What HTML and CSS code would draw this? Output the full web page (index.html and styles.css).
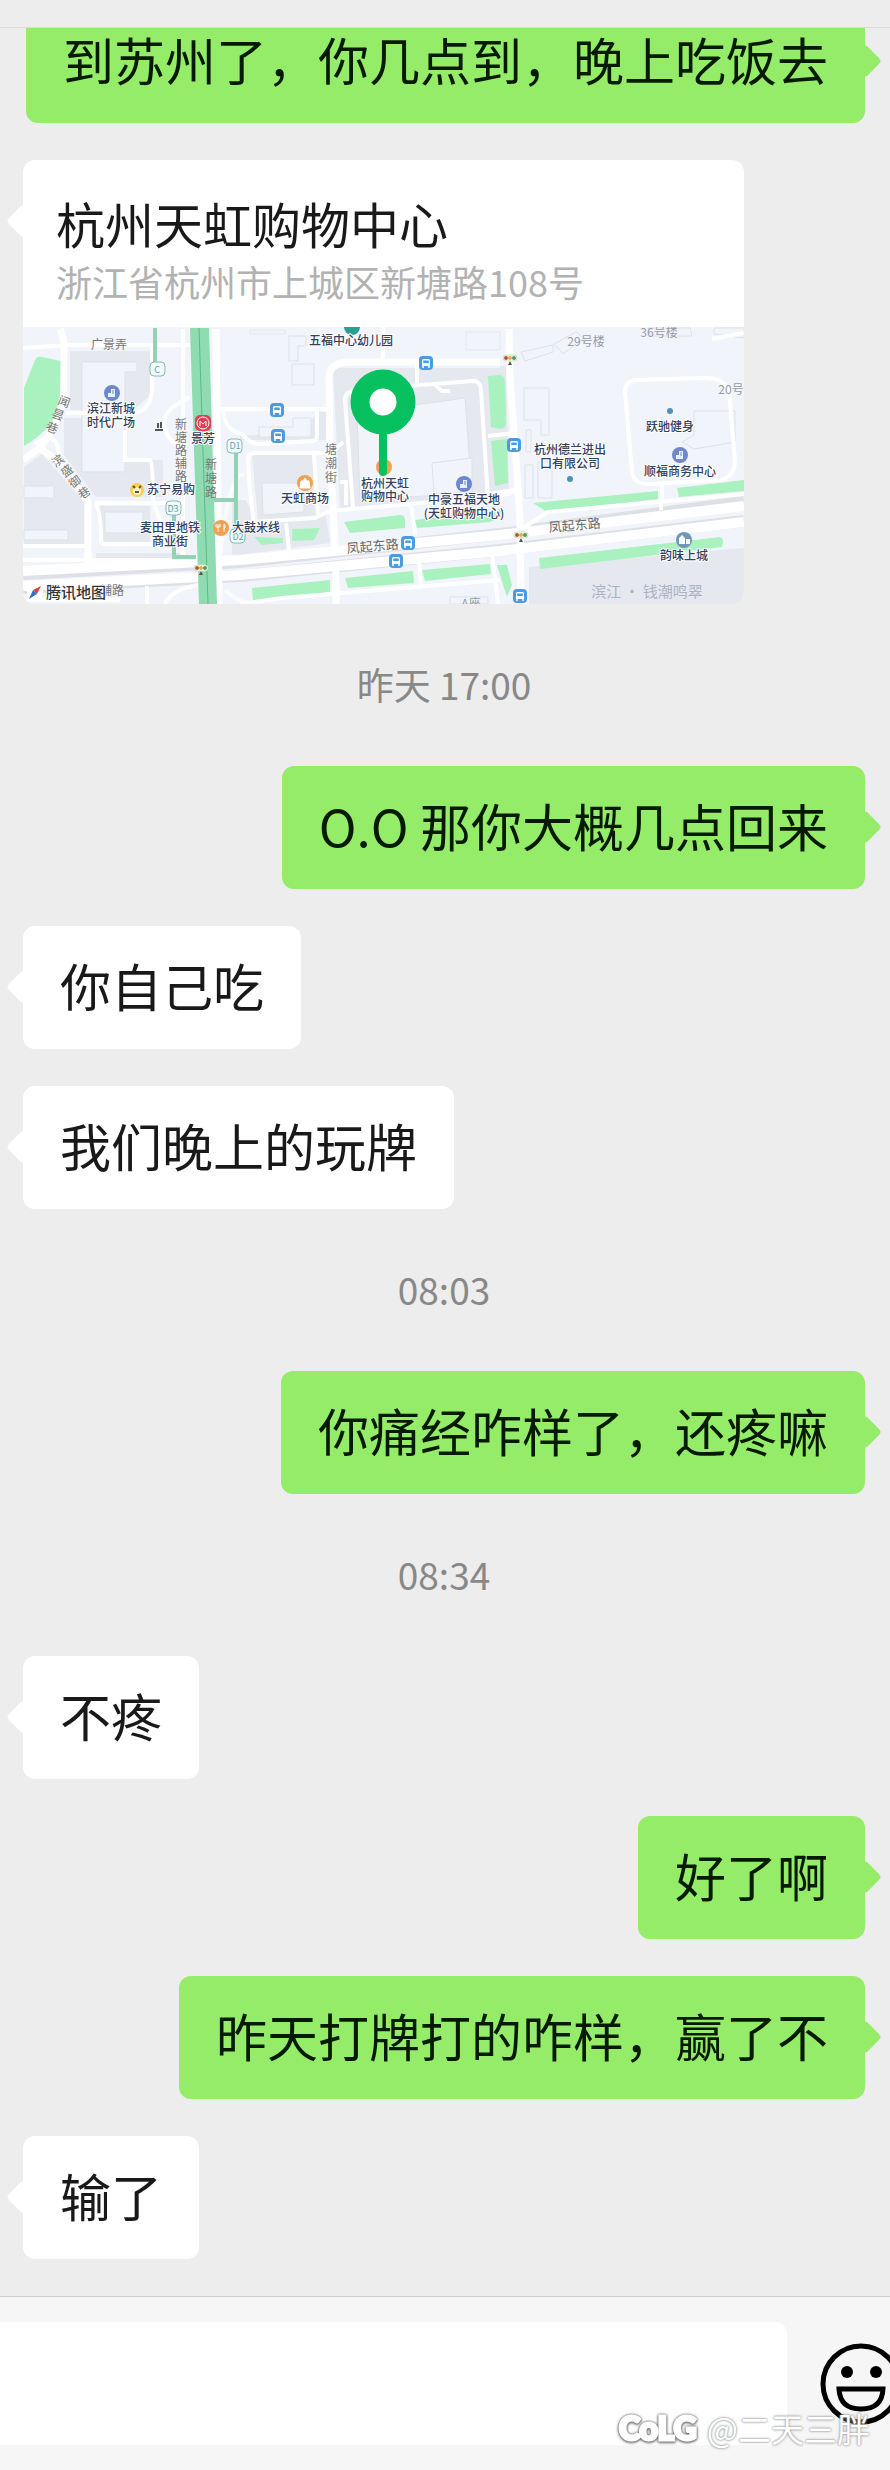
FILE: index.html
```html
<!DOCTYPE html>
<html lang="zh-CN">

<head>
    <meta charset="UTF-8">
    <meta name="viewport" content="width=device-width, initial-scale=1.0">
    <title>聊天</title>
    <link rel="stylesheet" href="styles.css">
</head>

<body>
    <header class="topbar"></header>

    <main class="chat">
        <div class="message sent">到苏州了，你几点到，晚上吃饭去</div>

        <div class="message received location">
            <h2 class="location-name">杭州天虹购物中心</h2>
            <p class="location-address">浙江省杭州市上城区新塘路108号</p>
            <svg class="map" viewBox="23 327 721 277" role="img" aria-label="地图">
                <defs>
                    <symbol id="bus" viewBox="0 0 16 16">
                        <rect x="1" y="1" width="14" height="14" rx="4" fill="#4a9be0" />
                        <path d="M4 5.500Q4 4 5.500 4H10.500Q12 4 12 5.500V11H4Z" fill="#fff" />
                        <path d="M5.200 5.500H10.800V8H5.200Z" fill="#4a9be0" />
                        <path d="M5 11V13M11 11V13" stroke="#fff" stroke-width="1.500" />
                    </symbol>
                    <symbol id="building" viewBox="0 0 16 16">
                        <circle cx="8" cy="8" r="8" fill="#6f87cb" />
                        <path d="M4 12V8H7V4H11V12Z" fill="#e8eefc" />
                        <path d="M8 6H10M8 8H10" stroke="#6f87cb" />
                    </symbol>
                    <symbol id="lights" viewBox="0 0 16 12">
                        <rect x="1" y="1" width="14" height="6" rx="3" fill="#fff" stroke="#cdb" />
                        <circle cx="4" cy="4" r="2" fill="#b0563e" />
                        <circle cx="8" cy="4" r="2" fill="#e0b040" />
                        <circle cx="12" cy="4" r="2" fill="#4d9a62" />
                        <path d="M8 7L10 11H6Z" fill="#555" />
                    </symbol>
                </defs>

                <rect x="23" y="327" width="721" height="277" fill="#f1f4fa" />

                <!-- city blocks -->
                <g fill="#e5e8ee">
                    <path d="M70 351H151V395L133 410H70Z" />
                    <path d="M64 418H122V460H163V497H96L64 455Z" />
                    <path d="M24 467L42 454L84 502V544H24Z" />
                    <path d="M98 506H150V543H104Z" />
                    <path d="M96 553H180V562H96Z" />
                    <path d="M333 368H500V500L340 510Z" />
                    <path d="M252 455H314L318 515L258 521Z" />
                    <path d="M232 500H246L256 522L326 516L330 543L232 556Z" />
                    <path d="M529 567L744 548V604H529Z" />
                    <path d="M318 412H326V440H240V436L300 432Z" />
                    <path d="M500 366H506L509 490H500Z" />
                </g>
                <g fill="#f1f4fa" stroke="#dde1ea">
                    <path d="M82 362H137V372H125V472H82Z" />
                    <path d="M105 512H143V533H105Z" />
                    <path d="M24 486H54V498H24ZM24 530H68V540H24Z" />
                    <path d="M357 413L465 398L472 493L360 500Z" />
                    <path d="M262 483H304V512L263 515Z" />
                    <path d="M289 336H306V346H298V361H289ZM292 364H314V385H292Z" />
                    <path d="M259 427H293V418H311V437H259Z" />
                    <path d="M524 388H549V435H541V420H524ZM526 430V452H531V430ZM525 465H533V498H525ZM538 462H552V498H538Z" />
                    <path d="M521 352L553 345L553 352L525 361ZM554 344L576 332L584 338L563 354Z" />
                    <path d="M694 411H735V442L694 449L682 442L694 435Z" />
                    <path d="M432 463L472 458V493H434Z" />
                    <path d="M250 330H285V334H250ZM466 332H500V350H466Z" opacity=".6" />
                    <path d="M648 328H690L692 336H650ZM714 328H744V338L714 334Z" />
                    <path d="M450 597H488V604H450Z" />
                </g>

                <!-- parks -->
                <g fill="#a9f2bf">
                    <path d="M24 388L35 360Q37 356 42 357L61 361L60 405Q52 430 24 446Z" />
                    <path d="M344 522L400 515Q405 515 405 520V528L350 533Z" />
                    <path d="M415 520L500 509L505 514L490 522L417 528Z" />
                    <path d="M254 537L283 538V543L262 545Z" />
                    <path d="M292 529L320 528L314 540L292 541Z" />
                    <path d="M252 588L330 580V593L253 602Z" />
                    <path d="M345 578L413 571L414 583L348 588Z" />
                    <path d="M422 570L490 564L491 574L425 581Z" />
                    <path d="M488 376L500 375Q505 376 505 382L506 422Q506 429 500 429L491 427Z" />
                    <path d="M491 441L507 439L508 483L495 486Z" />
                    <path d="M533 503L658 491V499L547 512Z" />
                    <path d="M677 488L744 480V491L679 497Z" />
                    <path d="M539 558L720 537Q725 538 722 547L540 569Z" />
                    <path d="M497 565H507L512 585L507 597L500 575Z" />
                </g>

                <!-- road edges, then the roads over them -->
                <g class="road-edge">
                    <path d="M23 574L240 562L500 534L744 502M23 588L240 576L500 550L744 521" />
                </g>
                <g class="road">
                    <path class="road-main" d="M23 571L240 560L500 535L744 506M23 586L240 575L500 551L744 522" />
                    <path class="road-wide" d="M60 329Q65 340 64 350V390Q61 420 40 448L23 460M40 448L62 465L88 502V564" />
                    <path d="M23 348L70 345H190M66 413H134Q151 410 152 390V345M125 430V460H150Q153 462 153 500L163 530" />
                    <path d="M23 546H88M23 560H190M95 503H180M95 503Q101 510 101 540Q101 544 106 544H190M35 444Q56 430 58 450L62 466" />
                    <path d="M183 329V558M190 397Q163 410 164 424Q167 445 187 447M23 600H120M147 586V604M165 604Q170 590 198 585" />
                    <path class="road-wide" d="M216 329L219 604" />
                    <path d="M216 409H327M317 409V436Q317 441 312 441L260 444Q250 444 242 434M223 410Q224 430 242 434" />
                    <path class="road-wide" d="M500 362H350Q329 362 329 378L330 443L335 548M336 570V604" />
                    <path d="M353 508L345 400Q345 392 355 391L420 385L474 381Q480 381 481 390L488 500M417 363V385M435 385L442 391H450M383 327V362" />
                    <path d="M254 522Q249 490 248 460Q248 453 255 453H332M314 455L318 517M254 522L315 518L330 511L500 496L520 490M286 523L289 550M411 505L415 535M332 452L343 442M340 482H346V505" />
                    <path class="road-wide" d="M509 329L510 377L520 517L521 604" />
                    <path d="M625 392Q625 381 636 380L705 378Q725 378 729 392L735 460Q735 477 720 480L650 484Q634 485 632 472ZM662 485L661 510M488 436L515 433M488 494L515 490" />
                    <path d="M520 530L548 512L744 494M240 604L282 598L500 580M419 560L421 585M492 554L498 604M712 339L744 333" />
                    <path d="M225 590Q235 600 250 604M216 604Q225 470 244 475M100 420L125 420" opacity=".6" />
                </g>

                <!-- metro line and its exits -->
                <path d="M190 328H209L217 604H199Z" fill="#8fdcb2" />
                <path d="M199 328L208 604" stroke="#5cb88a" fill="none" />
                <g stroke="#93d3b3" stroke-width="4" fill="none">
                    <path d="M155 328V362M236 452V528M214 500H236M174 512V557H196" />
                </g>
                <g class="exit">
                    <rect x="150" y="362" width="15" height="14" rx="4" />
                    <rect x="227" y="439" width="15" height="14" rx="4" />
                    <rect x="166" y="501" width="15" height="14" rx="4" />
                    <rect x="230" y="529" width="15" height="14" rx="4" />
                </g>
                <g class="exit-name">
                    <text x="157" y="373">C</text>
                    <text x="235" y="449">D1</text>
                    <text x="173" y="512">D3</text>
                    <text x="238" y="540">D2</text>
                </g>
                <rect x="195" y="415" width="16" height="16" rx="5" fill="#dc4254" />
                <circle cx="203" cy="423" r="6" fill="none" stroke="#fff" />
                <path d="M200 426V421L203 424L206 421V426" fill="none" stroke="#fff" />

                <!-- points of interest -->
                <use href="#bus" x="418" y="355" width="16" height="16" />
                <use href="#bus" x="269" y="402" width="16" height="16" />
                <use href="#bus" x="270" y="428" width="16" height="16" />
                <use href="#bus" x="400" y="535" width="16" height="16" />
                <use href="#bus" x="388" y="553" width="16" height="16" />
                <use href="#bus" x="506" y="437" width="16" height="16" />
                <use href="#bus" x="512" y="588" width="16" height="16" />
                <use href="#building" x="104" y="385" width="16" height="16" />
                <use href="#building" x="456" y="476" width="16" height="16" />
                <use href="#building" x="672" y="447" width="16" height="16" />
                <use href="#lights" x="193" y="564" width="16" height="12" />
                <use href="#lights" x="502" y="354" width="16" height="12" />
                <use href="#lights" x="513" y="531" width="16" height="12" />
                <circle cx="684" cy="540" r="8" fill="#6d97b8" />
                <path d="M679 544V538L682 535L685 538V544ZM686 539H690V544H686Z" fill="#fff" />
                <circle cx="670" cy="411" r="3" fill="#4c93b8" />
                <circle cx="570" cy="479" r="3" fill="#4c93b8" />
                <path d="M344 327A8 8 0 0 0 360 327Z" fill="#2a9d94" />
                <circle cx="137" cy="490" r="7" fill="#f8cf52" />
                <circle cx="137" cy="491" r="4" fill="#fff3cf" />
                <path d="M133 486L135 488M141 486L139 488M135 492H139" stroke="#7b4a18" stroke-width="2" />
                <circle cx="221" cy="528" r="8" fill="#f0a050" />
                <path d="M218 524V532M216 524V527H220V524M224 532V524Q227 526 224 529" stroke="#fff" fill="none" />
                <circle cx="305" cy="483" r="8" fill="#f0a050" />
                <path d="M301 481H309L310 488H300ZM303 481Q305 476 307 481" fill="#fff" stroke="#fff" />
                <path d="M155 431V429H163V431ZM157 428V423H159V428M160 422H162V428H160Z" fill="#555" />

                <g class="road-name">
                    <text x="109" y="349">广景弄</text>
                    <text x="181" y="429">新</text>
                    <text x="181" y="442">塘</text>
                    <text x="181" y="455">路</text>
                    <text x="181" y="468">辅</text>
                    <text x="181" y="481">路</text>
                    <text x="211" y="469">新</text>
                    <text x="211" y="483">塘</text>
                    <text x="211" y="497">路</text>
                    <text x="331" y="454">塘</text>
                    <text x="331" y="468">潮</text>
                    <text x="331" y="482">街</text>
                    <text x="112" y="595">辅路</text>
                    <text transform="translate(64 402) rotate(20)" y="4">闻</text>
                    <text transform="translate(58 415) rotate(20)" y="4">昙</text>
                    <text transform="translate(52 428) rotate(20)" y="4">巷</text>
                    <text transform="translate(58 461) rotate(-35)" y="4">滨</text>
                    <text transform="translate(67 471) rotate(-35)" y="4">盛</text>
                    <text transform="translate(75 482) rotate(-35)" y="4">御</text>
                    <text transform="translate(84 493) rotate(-35)" y="4">巷</text>
                </g>
                <g class="street">
                    <text transform="translate(373 551) rotate(-5)">凤起东路</text>
                    <text transform="translate(575 530) rotate(-5)">凤起东路</text>
                </g>
                <g class="house">
                    <text x="586" y="346">29号楼</text>
                    <text x="659" y="337">36号楼</text>
                    <text x="737" y="394">20号楼</text>
                </g>
                <g class="place">
                    <text x="111" y="413">滨江新城</text>
                    <text x="111" y="427">时代广场</text>
                    <text x="203" y="443">景芳</text>
                    <text x="171" y="494">苏宁易购</text>
                    <text x="170" y="532">麦田里地铁</text>
                    <text x="170" y="546">商业街</text>
                    <text x="256" y="532">大鼓米线</text>
                    <text x="351" y="345">五福中心幼儿园</text>
                    <text x="305" y="503">天虹商场</text>
                    <text x="385" y="488">杭州天虹</text>
                    <text x="385" y="501">购物中心</text>
                    <text x="464" y="504">中豪五福天地</text>
                    <text x="464" y="518">(天虹购物中心)</text>
                    <text x="570" y="454">杭州德兰进出</text>
                    <text x="570" y="468">口有限公司</text>
                    <text x="670" y="431">跃驰健身</text>
                    <text x="680" y="476">顺福商务中心</text>
                    <text x="684" y="560">韵味上城</text>
                </g>
                <text class="estate" x="647" y="597">滨江 · 钱潮鸣翠</text>
                <text class="house" x="471" y="608">A座</text>

                <!-- location pin -->
                <circle cx="384" cy="467" r="8" fill="#f0a050" />
                <path d="M383 430V472" stroke="#07c160" stroke-width="8" stroke-linecap="round" />
                <circle cx="383" cy="402" r="23" fill="#fff" stroke="#07c160" stroke-width="19" />

                <!-- map provider -->
                <circle cx="35" cy="592" r="8" fill="#fff" />
                <path d="M41 586L37 594L33 590Z" fill="#e0403a" />
                <path d="M29 599L33 590L37 594Z" fill="#2f6fd0" />
                <text class="provider" x="46" y="598">腾讯地图</text>
            </svg>
        </div>

        <time class="time">昨天 17:00</time>
        <div class="message sent">O.O 那你大概几点回来</div>
        <div class="message received">你自己吃</div>
        <div class="message received">我们晚上的玩牌</div>

        <time class="time">08:03</time>
        <div class="message sent">你痛经咋样了，还疼嘛</div>

        <time class="time">08:34</time>
        <div class="message received">不疼</div>
        <div class="message sent">好了啊</div>
        <div class="message sent">昨天打牌打的咋样，赢了不</div>
        <div class="message received">输了</div>
    </main>

    <footer class="composer">
        <input type="text" class="composer-input" aria-label="输入消息">
        <button type="button" class="emoji-button" aria-label="表情">
            <svg viewBox="0 0 82 82" fill="none" stroke="#000" stroke-width="5">
                <circle cx="41" cy="41" r="38" />
                <circle cx="27" cy="29" r="6" fill="#000" stroke="none" />
                <circle cx="56" cy="29" r="6" fill="#000" stroke="none" />
                <path d="M19 46H63Q62 66 41 66T19 46Z" />
            </svg>
        </button>
        <div class="watermark">
            <span class="watermark-logo">CoLG</span>
            <span>@二天三胖</span>
        </div>
    </footer>
</body>

</html>
```

FILE: styles.css
```css
* {
    box-sizing: border-box;
}

body {
    margin: 0;
    background-color: #ededed;
    color: #191919;
    font-family: "Noto Sans CJK SC", sans-serif;
}

.topbar {
    height: 27px;
    background-color: #ededed;
}

.chat {
    display: flex;
    flex-direction: column;
    gap: 37px;
    padding: 0 25px 37px 23px;
    border-top: 1px solid #dcdcdc;
    overflow: hidden;
}

.message {
    position: relative;
    max-width: 100%;
    padding: 22px 37px 26px;
    border-radius: 12px;
    font-size: 51px;
    line-height: 75px;
}

/* the little arrow at the side of the bubble */
.message::before {
    content: "";
    position: absolute;
    top: 49px;
    width: 24px;
    height: 24px;
    border-radius: 4px;
    background-color: inherit;
    transform: rotate(45deg);
}

.sent {
    align-self: flex-end;
    background-color: #95ec69;
    color: #061a00;
}

.sent::before {
    right: -12px;
}

.received {
    align-self: flex-start;
    background-color: #fff;
}

.received::before {
    left: -12px;
}

/* scrolled partly under the top bar */
.message:first-child {
    margin-top: -28px;
}

.time {
    padding-bottom: 2px;
    color: #888;
    font-size: 37px;
    line-height: 86px;
    text-align: center;
}

.location {
    width: 100%;
    max-width: 721px;
    padding: 34px 0 0;
}

.location-name,
.location-address {
    margin: 0;
    padding: 0 33px;
    font-weight: normal;
    line-height: 58px;
}

.location-name {
    font-size: 49px;
}

.location-address {
    margin-bottom: 17px;
    color: #b2b2b2;
    font-size: 36px;
}

.map {
    display: block;
    width: 100%;
    border-radius: 0 0 12px 12px;
}

.map text {
    text-anchor: middle;
    font-size: 12px;
}

.road {
    fill: none;
    stroke: #fff;
    stroke-width: 4;
}

.road-wide {
    stroke-width: 7;
}

.road-main {
    stroke-width: 10;
}

.road-edge {
    fill: none;
    stroke: #dde0e7;
    stroke-width: 12;
}

.exit {
    fill: #f4fbfa;
    stroke: #7fbcc0;
}

.exit-name {
    fill: #5fa3aa;
}

.map .exit-name text {
    font-size: 9px;
}

.road-name {
    fill: #777;
}

.street {
    fill: #666;
}

.map .street text {
    font-size: 13px;
}

.house {
    fill: #959ba8;
}

.place {
    fill: #33405e;
    stroke: #fff;
    stroke-width: 2px;
    paint-order: stroke;
    font-weight: 500;
}

.map .estate {
    fill: #aab3c4;
    font-size: 15px;
}

.map .provider {
    fill: #333;
    stroke: #fff;
    stroke-width: 2px;
    paint-order: stroke;
    font-size: 15px;
    font-weight: 500;
    text-anchor: start;
}

.composer {
    position: relative;
    display: flex;
    align-items: center;
    gap: 33px;
    padding: 25px 0;
    border-top: 1px solid #cfcfcf;
    background-color: #f6f6f6;
    overflow: hidden;
}

.composer-input {
    flex: 1;
    min-width: 0;
    height: 123px;
    padding: 0 24px;
    border: none;
    border-radius: 0 12px 12px 0;
    background-color: #fff;
    font: inherit;
    font-size: 51px;
}

.emoji-button {
    flex: none;
    width: 82px;
    height: 82px;
    margin-right: -12px;
    padding: 0;
    border: none;
    background: none;
    cursor: pointer;
}

.emoji-button svg {
    display: block;
}

.watermark {
    position: absolute;
    right: 20px;
    bottom: 18px;
    display: flex;
    align-items: center;
    gap: 10px;
    color: #fff;
    font-size: 33px;
    line-height: 48px;
    text-shadow: 0 0 2px #888, 0 0 3px #aaa;
    pointer-events: none;
}

.watermark-logo {
    font-family: Lato, sans-serif;
    font-size: 32px;
    font-weight: 900;
    -webkit-text-stroke: 3px #fff;
    text-shadow: none;
    filter: drop-shadow(0 0 1px #666) drop-shadow(0 1px 1px #777);
}
```
